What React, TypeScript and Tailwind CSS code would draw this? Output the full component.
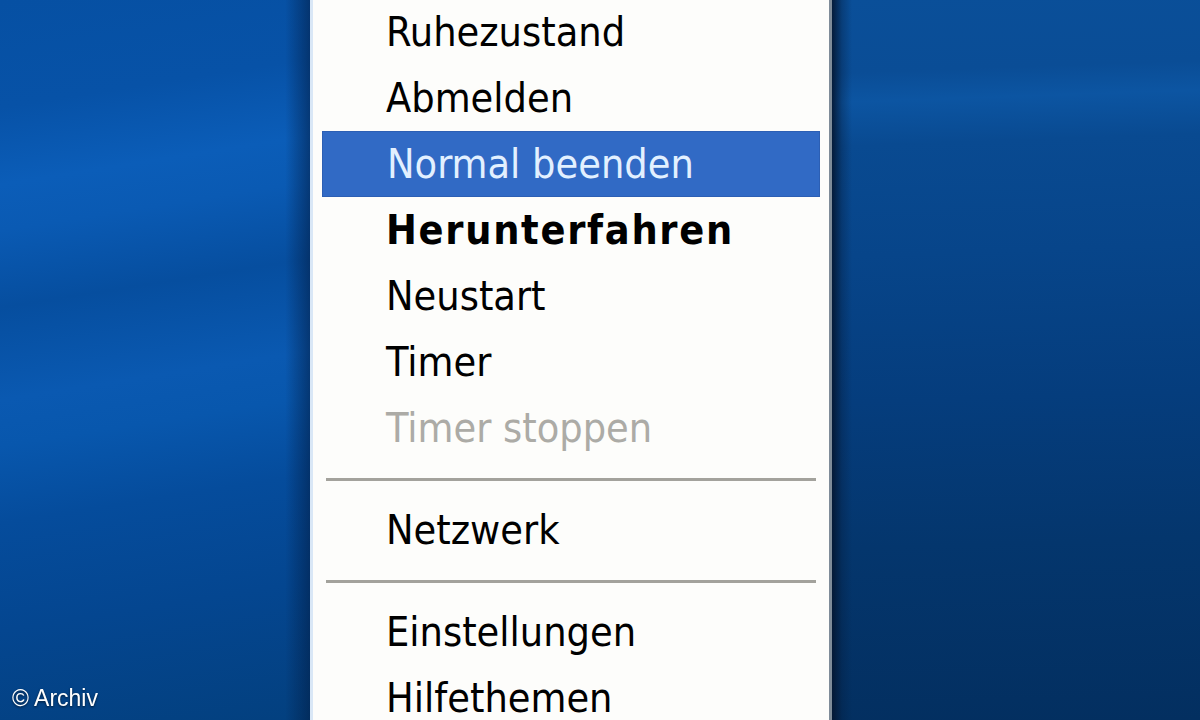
import { clsx } from "clsx"

type Entry =
  | { kind: "item"; label: string; active?: boolean; bold?: boolean; disabled?: boolean }
  | { kind: "sep" }

const entries: Entry[] = [
  { kind: "item", label: "Ruhezustand" },
  { kind: "item", label: "Abmelden" },
  { kind: "item", label: "Normal beenden", active: true },
  { kind: "item", label: "Herunterfahren", bold: true },
  { kind: "item", label: "Neustart" },
  { kind: "item", label: "Timer" },
  { kind: "item", label: "Timer stoppen", disabled: true },
  { kind: "sep" },
  { kind: "item", label: "Netzwerk" },
  { kind: "sep" },
  { kind: "item", label: "Einstellungen" },
  { kind: "item", label: "Hilfethemen" },
]

function MenuRow({ entry }: { entry: Entry }) {
  if (entry.kind === "sep") {
    return (
      <div className="h-[36px] flex items-center px-1">
        <div className="h-[3px] w-full bg-[#a3a29c]" />
      </div>
    )
  }

  return (
    <div
      className={clsx(
        "h-[66px] flex items-center pl-[64px] text-[41px] leading-none whitespace-nowrap",
        entry.active && "bg-[#316ac5] border border-[#2c5fb4] text-[#e2f0ff]",
        entry.bold && "font-bold tracking-[1.7px] text-black",
        entry.disabled && "text-[#acaba6]",
        !entry.active && !entry.bold && !entry.disabled && "text-black"
      )}
    >
      {entry.label}
    </div>
  )
}

export default function App() {
  return (
    <div className="relative w-[1200px] h-[720px] overflow-hidden flex font-[family-name:'DejaVu_Sans_Condensed','Liberation_Sans',sans-serif]">
      {/* desktop left of the menu */}
      <div className="w-[310px] h-full bg-[linear-gradient(90deg,transparent_92%,rgba(2,28,66,0.55)_100%),linear-gradient(171deg,#0650a3_0%,#0752a7_14%,#0b5db8_24%,#0a5ab3_30%,#064e9f_40%,#0a59b1_52%,#0857ad_58%,#054c9c_68%,#044690_82%,#03407f_100%)]" />

      {/* the menu */}
      <div className="w-[522px] h-full bg-[#fdfdfb] border-l-[3px] border-l-[#d9e7f6] border-r-[3px] border-r-[#7f8c99]">
        <div className="-mt-px px-[9px]">
          {entries.map((entry, i) => (
            <MenuRow key={i} entry={entry} />
          ))}
        </div>
      </div>

      {/* desktop right of the menu */}
      <div className="flex-1 h-full bg-[linear-gradient(90deg,rgba(4,22,48,0.9)_0px,rgba(4,30,64,0.35)_10px,transparent_20px),linear-gradient(178deg,#0a4f99_0%,#0a4d96_10%,#0c55a2_14%,#094a91_20%,#07458a_35%,#053d7d_55%,#04366d_75%,#032f60_100%)]" />

      <span className="absolute left-[12px] bottom-[10px] text-[23px] leading-none text-white font-[family-name:'Liberation_Sans',sans-serif] drop-shadow-[0_1px_1px_rgba(0,0,0,0.6)]">
        © Archiv
      </span>
    </div>
  )
}
